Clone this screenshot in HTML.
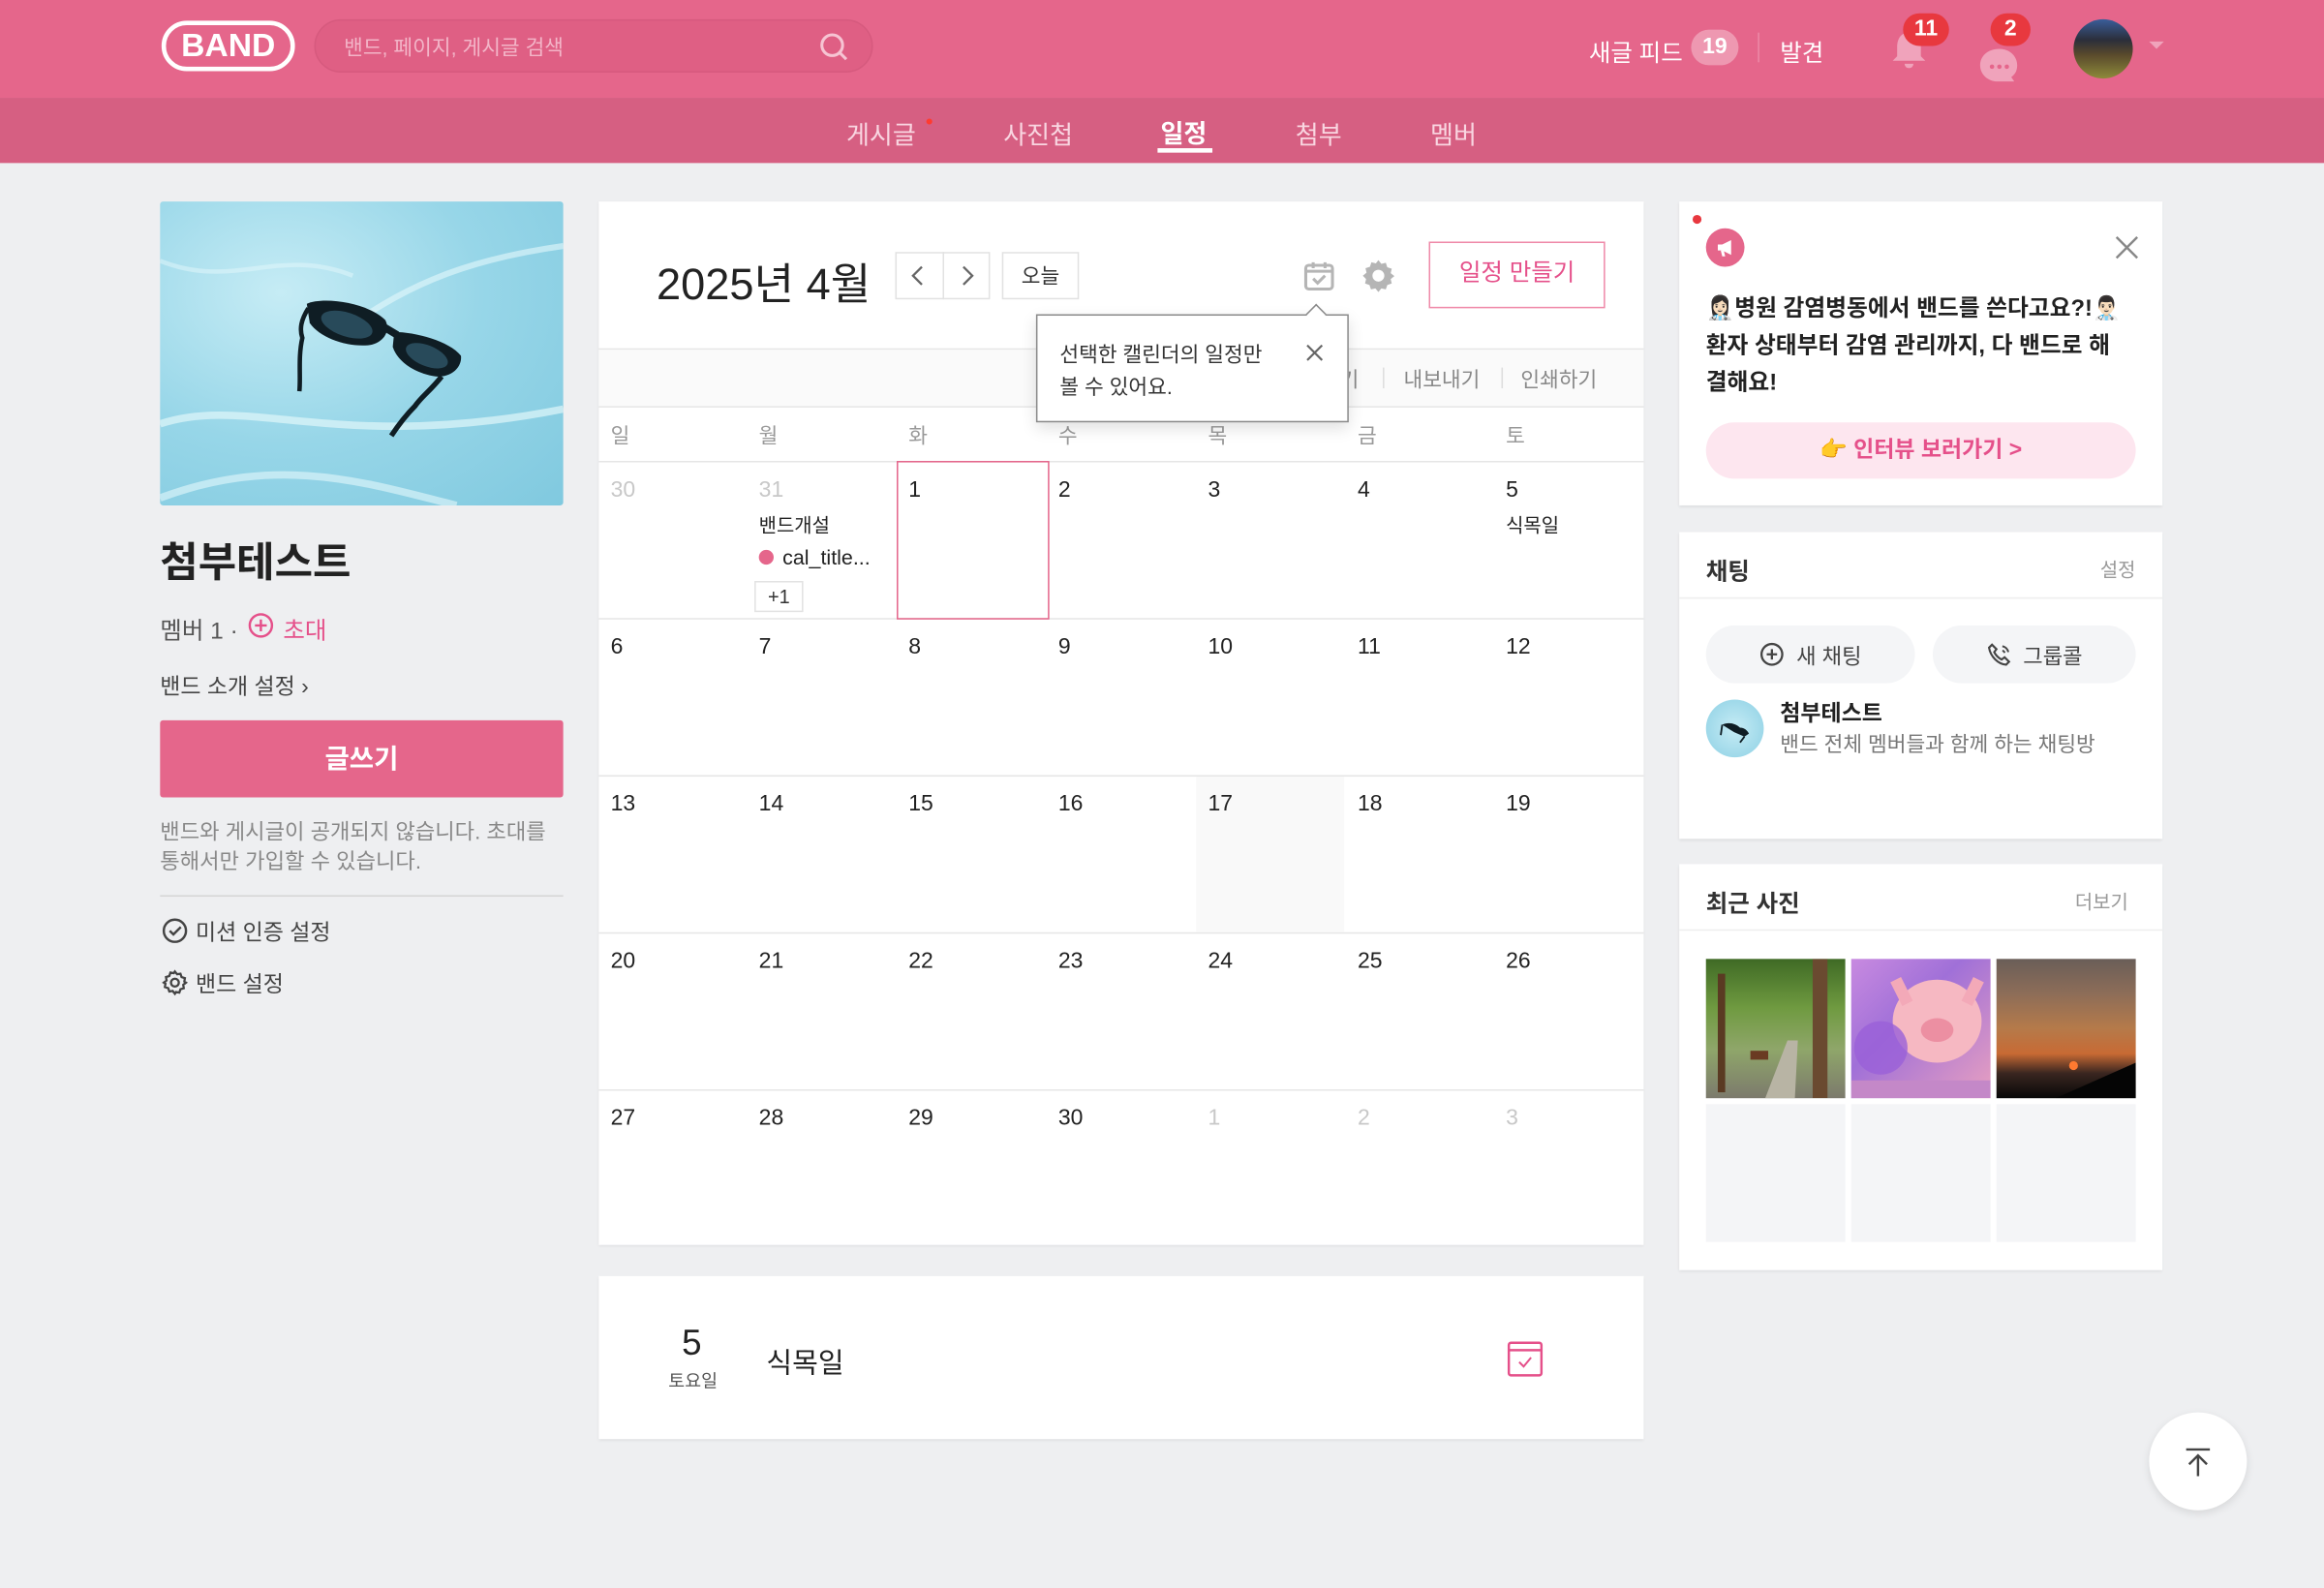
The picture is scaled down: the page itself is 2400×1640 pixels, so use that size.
<!DOCTYPE html>
<html><head><meta charset="utf-8">
<style>
*{margin:0;padding:0;box-sizing:border-box}
html,body{width:2400px;height:1640px;overflow:hidden;background:#eeeff1}
body{font-family:"Liberation Sans","Noto Sans CJK KR",sans-serif;color:#222}
#s{position:absolute;left:0;top:0;width:1568px;height:1071px;transform:scale(1.530612);transform-origin:0 0;background:#eeeff1}
.a{position:absolute}
.card{position:absolute;background:#fff;box-shadow:0 1px 2px rgba(0,0,0,.08)}
.num{position:absolute;font-size:15px;color:#222}
.g{color:#c8c8c8}
.hl{position:absolute;left:0;width:705px;height:1px;background:#e6e6e6}
</style></head><body>
<div id="s">
<!-- header -->
<div class="a" style="left:0;top:0;width:1568px;height:66px;background:#e5668b"></div>
<div class="a" style="left:0;top:66px;width:1568px;height:44px;background:#d65f82"></div>
<div class="a" style="left:109px;top:14px;width:90px;height:34px;border:3px solid #fff;border-radius:17px;color:#fff;font-weight:bold;font-size:22px;text-align:center;line-height:28px">BAND</div>
<div class="a" style="left:212px;top:13px;width:377px;height:36px;border-radius:18px;background:#df5f84;border:1px solid #d65a7e"></div>
<div class="a" style="left:232px;top:22px;font-size:14px;color:#f3b5c8">밴드, 페이지, 게시글 검색</div>
<svg class="a" style="left:552px;top:21px" width="22" height="22" viewBox="0 0 22 22"><circle cx="9.5" cy="9.5" r="7" fill="none" stroke="#f6c4d3" stroke-width="2"/><path d="M14.5 14.5L19 19" stroke="#f6c4d3" stroke-width="2"/></svg>
<div class="a" style="left:1072px;top:22px;font-size:16px;color:#fff">새글 피드</div>
<div class="a" style="left:1141px;top:20px;width:32px;height:24px;border-radius:12px;background:#ee98b1;color:#fff;font-weight:bold;font-size:15px;text-align:center;line-height:24px">19</div>
<div class="a" style="left:1186px;top:22px;width:1px;height:20px;background:#ec8aa6"></div>
<div class="a" style="left:1201px;top:22px;font-size:16px;color:#fff">발견</div>
<svg class="a" style="left:1274px;top:18px" width="28" height="30" viewBox="0 0 28 30"><path d="M14 4C8 4 6 9 6 14v6l-3 3h22l-3-3v-6c0-5-2-10-8-10z" fill="#f0a3bb"/><path d="M11 25a3 3 0 0 0 6 0z" fill="#f0a3bb"/></svg>
<div class="a" style="left:1284px;top:9px;width:31px;height:22px;border-radius:11px;background:#e8383f;color:#fff;font-weight:bold;font-size:15px;text-align:center;line-height:22px">11</div>
<svg class="a" style="left:1333px;top:30px" width="32" height="30" viewBox="0 0 32 30"><path d="M16 3C8 3 3 8 3 14c0 6 5 11 12 11h11l-2-3c3-2 4-5 4-8 0-6-5-11-12-11z" fill="#f0a3bb"/><circle cx="11" cy="15" r="1.5" fill="#e5668b"/><circle cx="16" cy="15" r="1.5" fill="#e5668b"/><circle cx="21" cy="15" r="1.5" fill="#e5668b"/></svg>
<div class="a" style="left:1343px;top:9px;width:27px;height:22px;border-radius:11px;background:#e8383f;color:#fff;font-weight:bold;font-size:15px;text-align:center;line-height:22px">2</div>
<div class="a" style="left:1399px;top:13px;width:40px;height:40px;border-radius:50%;overflow:hidden;background:linear-gradient(180deg,#3a5d9a 0%,#2b2e3a 35%,#5a4a2c 60%,#8d8a3a 100%)"></div>
<div class="a" style="left:1450px;top:28px;width:0;height:0;border-left:5px solid transparent;border-right:5px solid transparent;border-top:5px solid #f0a3bb"></div>
<!-- subnav -->
<div class="a" style="left:571px;top:77px;font-size:17px;color:#f9d6e1">게시글</div>
<div class="a" style="left:625px;top:80px;width:4px;height:4px;border-radius:2px;background:#ff3b30"></div>
<div class="a" style="left:677px;top:77px;font-size:17px;color:#f9d6e1">사진첩</div>
<div class="a" style="left:783px;top:76px;font-size:17px;color:#fff;font-weight:bold">일정</div>
<div class="a" style="left:781px;top:100px;width:37px;height:3px;background:#fff"></div>
<div class="a" style="left:874px;top:77px;font-size:17px;color:#f9d6e1">첨부</div>
<div class="a" style="left:965px;top:77px;font-size:17px;color:#f9d6e1">멤버</div>

<!-- left column -->
<div class="a" style="left:108px;top:136px;width:272px;height:205px;border-radius:2px;overflow:hidden;background:radial-gradient(ellipse at 30% 30%,#c6ecf5,#97d6e8 50%,#80c9df 100%)">
<svg width="272" height="205" viewBox="0 0 272 205"><path d="M0 150 C60 130 120 170 272 140" stroke="#dff6fa" stroke-width="5" fill="none" opacity=".7"/><path d="M120 90 C160 60 200 40 272 30" stroke="#e4f8fb" stroke-width="4" fill="none" opacity=".6"/><path d="M0 200 C80 170 140 190 200 205" stroke="#e4f8fb" stroke-width="5" fill="none" opacity=".6"/><path d="M0 40 C50 60 80 30 130 50" stroke="#e4f8fb" stroke-width="3" fill="none" opacity=".5"/>
<path d="M99 69 C110 64 140 68 152 80 C156 88 150 96 140 97 C125 98 108 92 101 82 Z" fill="#0f1d24"/>
<path d="M150 84 L160 90" stroke="#0f1d24" stroke-width="5"/>
<path d="M158 88 C172 88 195 94 203 104 C204 112 196 119 186 118 C172 116 160 108 157 98 Z" fill="#0f1d24"/>
<ellipse cx="126" cy="83" rx="18" ry="8" transform="rotate(18 126 83)" fill="#284a5a"/>
<ellipse cx="180" cy="104" rx="15" ry="7" transform="rotate(22 180 104)" fill="#284a5a"/>
<path d="M100 72 C95 80 94 86 96 92 C93 105 95 118 94 128" stroke="#0f1d24" stroke-width="3" fill="none"/>
<path d="M190 118 C182 128 176 132 172 138 C165 145 160 152 156 158" stroke="#0f1d24" stroke-width="3.5" fill="none"/></svg></div>
<div class="a" style="left:108px;top:358px;font-size:28px;font-weight:bold;color:#222">첨부테스트</div>
<div class="a" style="left:108px;top:412px;font-size:16px;color:#555">멤버 1 ·</div>
<svg class="a" style="left:167px;top:413px" width="18" height="18" viewBox="0 0 18 18"><circle cx="9" cy="9" r="7.5" fill="none" stroke="#e5508a" stroke-width="1.6"/><path d="M9 5v8M5 9h8" stroke="#e5508a" stroke-width="1.6"/></svg>
<div class="a" style="left:191px;top:412px;font-size:16px;color:#e5508a">초대</div>
<div class="a" style="left:108px;top:452px;font-size:15px;color:#444">밴드 소개 설정 ›</div>
<div class="a" style="left:108px;top:486px;width:272px;height:52px;background:#e5668b;border-radius:2px;color:#fff;font-size:18px;font-weight:bold;text-align:center;line-height:52px">글쓰기</div>
<div class="a" style="left:108px;top:552px;width:275px;font-size:14.5px;color:#888;line-height:20px">밴드와 게시글이 공개되지 않습니다. 초대를 통해서만 가입할 수 있습니다.</div>
<div class="a" style="left:108px;top:604px;width:272px;height:1px;background:#d5d5d5"></div>
<svg class="a" style="left:109px;top:619px" width="18" height="18" viewBox="0 0 18 18"><circle cx="9" cy="9" r="7.5" fill="none" stroke="#444" stroke-width="1.6"/><path d="M5.5 9l2.5 2.5 5-5" stroke="#444" stroke-width="1.6" fill="none"/></svg>
<div class="a" style="left:132px;top:618px;font-size:15px;color:#444">미션 인증 설정</div>
<svg class="a" style="left:109px;top:654px" width="18" height="18" viewBox="0 0 24 24"><path d="M12 2l2 2.5 3-.5 1 3 3 1-.5 3L22 12l-2.5 2 .5 3-3 1-1 3-3-.5L12 22l-2-2.5-3 .5-1-3-3-1 .5-3L2 12l2.5-2-.5-3 3-1 1-3 3 .5z" fill="none" stroke="#444" stroke-width="2"/><circle cx="12" cy="12" r="3.5" fill="none" stroke="#444" stroke-width="2"/></svg>
<div class="a" style="left:132px;top:653px;font-size:15px;color:#444">밴드 설정</div>

<!-- calendar card -->
<div class="card" style="left:404px;top:136px;width:705px;height:704px">
  <div class="a" style="left:39px;top:33px;font-size:29.5px;color:#222">2025년 4월</div>
  <div class="a" style="left:200px;top:34px;width:64px;height:32px;border:1px solid #e2e2e2"></div>
  <div class="a" style="left:232px;top:34px;width:1px;height:32px;background:#e2e2e2"></div>
  <svg class="a" style="left:209px;top:42px" width="14" height="16"><path d="M9 2L3 8l6 6" stroke="#666" stroke-width="1.5" fill="none"/></svg>
  <svg class="a" style="left:242px;top:42px" width="14" height="16"><path d="M4 2l6 6-6 6" stroke="#666" stroke-width="1.5" fill="none"/></svg>
  <div class="a" style="left:272px;top:34px;width:52px;height:32px;border:1px solid #e2e2e2;font-size:14px;text-align:center;line-height:30px;color:#333">오늘</div>
  <svg class="a" style="left:474px;top:38px" width="24" height="24" viewBox="0 0 24 24"><rect x="3" y="5" width="18" height="16" rx="2" fill="none" stroke="#b5b5b5" stroke-width="2"/><path d="M3 9h18M8 3v4M16 3v4" stroke="#b5b5b5" stroke-width="2"/><path d="M8 14l3 3 5-5" stroke="#b5b5b5" stroke-width="2" fill="none"/></svg>
  <svg class="a" style="left:514px;top:38px" width="24" height="24" viewBox="0 0 24 24"><path d="M12 1.5l2 2.5 3-.7 1 3 3 1-.7 3 2.5 2-2.5 2 .7 3-3 1-1 3-3-.7-2 2.5-2-2.5-3 .7-1-3-3-1 .7-3L1.5 12l2.5-2-.7-3 3-1 1-3 3 .7z" fill="#b5b5b5"/><circle cx="12" cy="12" r="4" fill="#fff"/></svg>
  <div class="a" style="left:560px;top:27px;width:119px;height:45px;border:1.5px solid #ef8aa9;color:#e5508a;font-size:16px;text-align:center;line-height:42px">일정 만들기</div>
  <div class="hl" style="top:99px"></div>
  <div class="a" style="left:0;top:100px;width:705px;height:38px;background:#fafafa"></div>
  <div class="a" style="left:500px;top:110px;font-size:14px;color:#888">기</div>
  <div class="a" style="left:529px;top:112px;width:1px;height:14px;background:#ddd"></div>
  <div class="a" style="left:543px;top:110px;font-size:14px;color:#888">내보내기</div>
  <div class="a" style="left:609px;top:112px;width:1px;height:14px;background:#ddd"></div>
  <div class="a" style="left:622px;top:110px;font-size:14px;color:#888">인쇄하기</div>
  <div class="hl" style="top:138px"></div>
  <div class="a" style="left:8px;top:148px;font-size:14px;color:#999">일</div>
  <div class="a" style="left:108px;top:148px;font-size:14px;color:#999">월</div>
  <div class="a" style="left:209px;top:148px;font-size:14px;color:#999">화</div>
  <div class="a" style="left:310px;top:148px;font-size:14px;color:#999">수</div>
  <div class="a" style="left:411px;top:148px;font-size:14px;color:#999">목</div>
  <div class="a" style="left:512px;top:148px;font-size:14px;color:#999">금</div>
  <div class="a" style="left:612px;top:148px;font-size:14px;color:#999">토</div>
  <div class="hl" style="top:175px"></div>
  <div class="hl" style="top:281px"></div>
  <div class="hl" style="top:387px"></div>
  <div class="hl" style="top:493px"></div>
  <div class="hl" style="top:599px"></div>
  <div class="a" style="left:403px;top:388px;width:100px;height:105px;background:#f9f9f9"></div>
  <div class="a" style="left:201px;top:175px;width:103px;height:107px;border:1.5px solid #e5668b"></div>
  <div class="num g" style="left:8px;top:186px">30</div>
  <div class="num g" style="left:108px;top:186px">31</div>
  <div class="a" style="left:108px;top:208px;font-size:13px;color:#222">밴드개설</div>
  <div class="a" style="left:108px;top:235px;width:10px;height:10px;border-radius:5px;background:#e5668b"></div>
  <div class="a" style="left:124px;top:232px;font-size:14px;color:#222">cal_title...</div>
  <div class="a" style="left:105px;top:256px;width:33px;height:21px;border:1px solid #e2e2e2;font-size:13px;text-align:center;line-height:19px;color:#333">+1</div>
  <div class="num" style="left:209px;top:186px">1</div>
  <div class="num" style="left:310px;top:186px">2</div>
  <div class="num" style="left:411px;top:186px">3</div>
  <div class="num" style="left:512px;top:186px">4</div>
  <div class="num" style="left:612px;top:186px">5</div>
  <div class="a" style="left:612px;top:208px;font-size:13px;color:#222">식목일</div>
  <div class="num" style="left:8px;top:292px">6</div><div class="num" style="left:108px;top:292px">7</div><div class="num" style="left:209px;top:292px">8</div><div class="num" style="left:310px;top:292px">9</div><div class="num" style="left:411px;top:292px">10</div><div class="num" style="left:512px;top:292px">11</div><div class="num" style="left:612px;top:292px">12</div>
  <div class="num" style="left:8px;top:398px">13</div><div class="num" style="left:108px;top:398px">14</div><div class="num" style="left:209px;top:398px">15</div><div class="num" style="left:310px;top:398px">16</div><div class="num" style="left:411px;top:398px">17</div><div class="num" style="left:512px;top:398px">18</div><div class="num" style="left:612px;top:398px">19</div>
  <div class="num" style="left:8px;top:504px">20</div><div class="num" style="left:108px;top:504px">21</div><div class="num" style="left:209px;top:504px">22</div><div class="num" style="left:310px;top:504px">23</div><div class="num" style="left:411px;top:504px">24</div><div class="num" style="left:512px;top:504px">25</div><div class="num" style="left:612px;top:504px">26</div>
  <div class="num" style="left:8px;top:610px">27</div><div class="num" style="left:108px;top:610px">28</div><div class="num" style="left:209px;top:610px">29</div><div class="num" style="left:310px;top:610px">30</div><div class="num g" style="left:411px;top:610px">1</div><div class="num g" style="left:512px;top:610px">2</div><div class="num g" style="left:612px;top:610px">3</div>
  <div class="a" style="left:295px;top:76px;width:211px;height:73px;background:#fff;border:1px solid #8a8a8a;box-shadow:0 4px 10px rgba(0,0,0,.12)"></div>
  <div class="a" style="left:479px;top:71px;width:10px;height:10px;background:#fff;border-left:1px solid #8a8a8a;border-top:1px solid #8a8a8a;transform:rotate(45deg)"></div>
  <div class="a" style="left:311px;top:92px;font-size:14px;color:#333;line-height:22px">선택한 캘린더의 일정만<br>볼 수 있어요.</div>
  <svg class="a" style="left:476px;top:95px" width="14" height="14"><path d="M2 2l10 10M12 2L2 12" stroke="#666" stroke-width="1.4"/></svg>
</div>

<!-- bottom card -->
<div class="card" style="left:404px;top:861px;width:705px;height:110px">
  <div class="a" style="left:56px;top:32px;font-size:24px;color:#222">5</div>
  <div class="a" style="left:47px;top:62px;font-size:12px;color:#555">토요일</div>
  <div class="a" style="left:113px;top:44px;font-size:19px;color:#222">식목일</div>
  <svg class="a" style="left:612px;top:43px" width="26" height="26" viewBox="0 0 26 26"><rect x="2" y="2" width="22" height="22" rx="1.5" fill="none" stroke="#e5508a" stroke-width="1.6"/><path d="M2 7h22" stroke="#e5508a" stroke-width="1.6"/><path d="M9 15l3 3 5-6" stroke="#e5508a" stroke-width="1.3" fill="none"/></svg>
</div>

<!-- right: ad -->
<div class="card" style="left:1133px;top:136px;width:326px;height:205px">
  <div class="a" style="left:9px;top:9px;width:6px;height:6px;border-radius:3px;background:#e8383f"></div>
  <div class="a" style="left:18px;top:18px;width:26px;height:26px;border-radius:13px;background:#e5668b"></div>
  <svg class="a" style="left:24px;top:24px" width="14" height="14" viewBox="0 0 14 14"><path d="M2 5h3l6-3v10L5 9H2z" fill="#fff"/><path d="M4 9l1 4h2l-1-4" fill="#fff"/></svg>
  <svg class="a" style="left:294px;top:23px" width="16" height="16"><path d="M1 1l14 14M15 1L1 15" stroke="#888" stroke-width="1.6"/></svg>
  <div class="a" style="left:18px;top:60px;width:310px;font-size:15.5px;font-weight:bold;color:#222;line-height:25px;white-space:nowrap">👩🏻‍⚕️병원 감염병동에서 밴드를 쓴다고요?!👨🏻‍⚕️<br>환자 상태부터 감염 관리까지, 다 밴드로 해<br>결해요!</div>
  <div class="a" style="left:18px;top:149px;width:290px;height:38px;border-radius:19px;background:#fde6ef;color:#e5508a;font-size:15px;font-weight:bold;text-align:center;line-height:38px">👉 인터뷰 보러가기 &gt;</div>
</div>

<!-- chat -->
<div class="card" style="left:1133px;top:359px;width:326px;height:207px">
  <div class="a" style="left:18px;top:13px;font-size:16px;font-weight:bold;color:#333">채팅</div>
  <div class="a" style="left:284px;top:15px;font-size:13px;color:#999">설정</div>
  <div class="a" style="left:0;top:44px;width:326px;height:1px;background:#eee"></div>
  <div class="a" style="left:18px;top:63px;width:141px;height:39px;border-radius:20px;background:#f4f5f7"></div>
  <svg class="a" style="left:54px;top:74px" width="17" height="17"><circle cx="8.5" cy="8.5" r="7" fill="none" stroke="#444" stroke-width="1.5"/><path d="M8.5 5v7M5 8.5h7" stroke="#444" stroke-width="1.5"/></svg>
  <div class="a" style="left:79px;top:73px;font-size:14.5px;color:#444">새 채팅</div>
  <div class="a" style="left:171px;top:63px;width:137px;height:39px;border-radius:20px;background:#f4f5f7"></div>
  <svg class="a" style="left:207px;top:74px" width="18" height="18" viewBox="0 0 18 18"><path d="M4 2l3 3-1.5 2c1 2 3 4 5 5l2-1.5 3 3-2 2C8 15 3 10 2 4z" fill="none" stroke="#444" stroke-width="1.4"/><path d="M11 3a5 5 0 0 1 4 4M11 6a2 2 0 0 1 1.5 1.5" stroke="#444" stroke-width="1.3" fill="none"/></svg>
  <div class="a" style="left:232px;top:73px;font-size:14.5px;color:#444">그룹콜</div>
  <div class="a" style="left:18px;top:113px;width:39px;height:39px;border-radius:50%;background:radial-gradient(#c6ecf5,#8dd0e4)"></div>
  <svg class="a" style="left:18px;top:113px" width="39" height="39"><path d="M11 17c4-2 9-1 12 2 3 0 5 2 6 4l-3 2-7-3z" fill="#0f1d24"/><path d="M11 17l-1 7M26 25l-3 4" stroke="#0f1d24" stroke-width="1.2"/></svg>
  <div class="a" style="left:68px;top:111px;font-size:15px;font-weight:bold;color:#222">첨부테스트</div>
  <div class="a" style="left:68px;top:133px;font-size:14px;color:#777">밴드 전체 멤버들과 함께 하는 채팅방</div>
</div>

<!-- photos -->
<div class="card" style="left:1133px;top:583px;width:326px;height:274px">
  <div class="a" style="left:18px;top:13px;font-size:16px;font-weight:bold;color:#333">최근 사진</div>
  <div class="a" style="left:267px;top:15px;font-size:13px;color:#999">더보기</div>
  <div class="a" style="left:0;top:44px;width:326px;height:1px;background:#eee"></div>
  <div class="a" style="left:18px;top:64px;width:94px;height:94px;overflow:hidden;background:linear-gradient(180deg,#3f6a25 0%,#6f9a40 35%,#8fa66a 65%,#7c7a6c 100%)">
    <svg width="94" height="94"><rect x="8" y="10" width="5" height="80" fill="#5a3a22"/><rect x="72" y="0" width="10" height="94" fill="#6a4a30"/><path d="M40 94 L55 55 L62 55 L60 94Z" fill="#b8b4a4"/><rect x="30" y="62" width="12" height="6" fill="#6a3a22"/></svg></div>
  <div class="a" style="left:116px;top:64px;width:94px;height:94px;overflow:hidden;background:linear-gradient(135deg,#c88ae0 0%,#a070d8 40%,#e8a0c0 100%)">
    <svg width="94" height="94"><ellipse cx="58" cy="42" rx="30" ry="28" fill="#f6b8c2"/><ellipse cx="58" cy="48" rx="11" ry="8" fill="#ec8fa2"/><path d="M30 14l8 16M86 14l-8 16" stroke="#f3a9b8" stroke-width="8"/><circle cx="20" cy="60" r="18" fill="#9a60d8" opacity=".8"/><rect x="0" y="82" width="94" height="12" fill="#c488c8"/></svg></div>
  <div class="a" style="left:214px;top:64px;width:94px;height:94px;overflow:hidden;background:linear-gradient(180deg,#6a5e58 0%,#8d6d58 25%,#b57a4a 50%,#c86a34 68%,#3a2620 82%,#080808 100%)">
    <svg width="94" height="94"><circle cx="52" cy="72" r="3" fill="#ff7a30"/><path d="M40 94 L94 70 L94 94Z" fill="#050505"/></svg></div>
  <div class="a" style="left:18px;top:162px;width:94px;height:93px;background:#f4f5f7"></div>
  <div class="a" style="left:116px;top:162px;width:94px;height:93px;background:#f4f5f7"></div>
  <div class="a" style="left:214px;top:162px;width:94px;height:93px;background:#f4f5f7"></div>
</div>

<!-- scroll top -->
<div class="a" style="left:1450px;top:953px;width:66px;height:66px;border-radius:33px;background:#fff;box-shadow:0 2px 6px rgba(0,0,0,.1)"></div>
<svg class="a" style="left:1472px;top:976px" width="22" height="22"><path d="M3 2h16M11 6v14M5 12l6-6 6 6" stroke="#444" stroke-width="1.6" fill="none"/></svg>
</div>
</body></html>
